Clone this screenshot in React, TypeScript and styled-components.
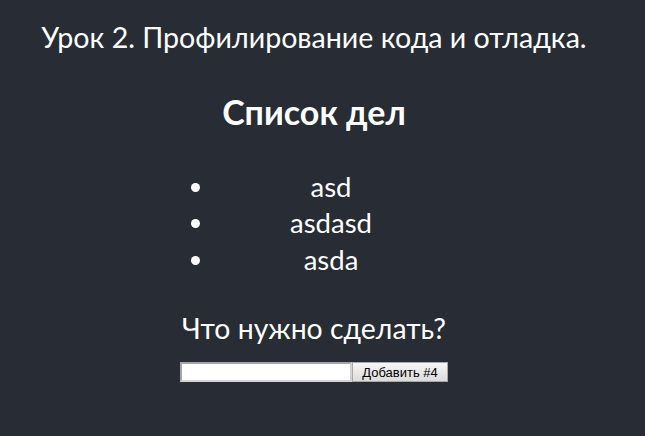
import React from "react";
import styled, { createGlobalStyle } from "styled-components";

const Global = createGlobalStyle`
  html, body { margin: 0; padding: 0; background: #282c34; }
  body { font-family: Lato, "Open Sans", sans-serif; color: #ffffff; }
`;

const Page = styled.div`
  width: 628px;
  min-height: 436px;
  display: flex;
  flex-direction: column;
  align-items: center;
  text-align: center;
`;

const Title = styled.h1`
  margin: 17px 0 0;
  font-size: 28.6px;
  font-weight: 400;
  line-height: 40px;
  white-space: nowrap;
`;

const Heading = styled.h2`
  margin: 35px 0 0;
  font-size: 34px;
  font-weight: 700;
  line-height: 40px;
`;

const List = styled.ul`
  margin: 36.5px 0 0;
  padding: 0 0 0 34px;
  width: 230px;
  font-size: 27.5px;
  line-height: 36.5px;
`;

const Item = styled.li`
  text-align: center;
`;

const Question = styled.h3`
  margin: 30px 0 0;
  font-size: 28.4px;
  font-weight: 400;
  line-height: 40px;
`;

const Form = styled.form`
  display: flex;
  margin-top: 14px;
`;

const Input = styled.input`
  box-sizing: border-box;
  width: 172px;
  height: 20px;
  margin: 0;
  border: 2px solid;
  border-color: #a6a6a6 #d4d4d4 #d4d4d4 #a6a6a6;
  background: #ffffff;
  padding: 0 2px;
`;

const Button = styled.button`
  box-sizing: border-box;
  width: 96px;
  height: 20px;
  margin: 0;
  padding: 0;
  border: 1px solid #a9a9a9;
  background: linear-gradient(#f7f7f7, #dcdcdc);
  font-family: "Liberation Sans", Arial, sans-serif;
  font-size: 13px;
  color: #000;
`;

export default function App() {
  const items = ["asd", "asdasd", "asda"];
  return (
    <>
      <Global />
      <Page>
        <Title>Урок 2. Профилирование кода и отладка.</Title>
        <Heading>Список дел</Heading>
        <List>
          {items.map((t) => (
            <Item key={t}>{t}</Item>
          ))}
        </List>
        <Question>Что нужно сделать?</Question>
        <Form onSubmit={(e) => e.preventDefault()}>
          <Input />
          <Button type="submit">Добавить #4</Button>
        </Form>
      </Page>
    </>
  );
}
